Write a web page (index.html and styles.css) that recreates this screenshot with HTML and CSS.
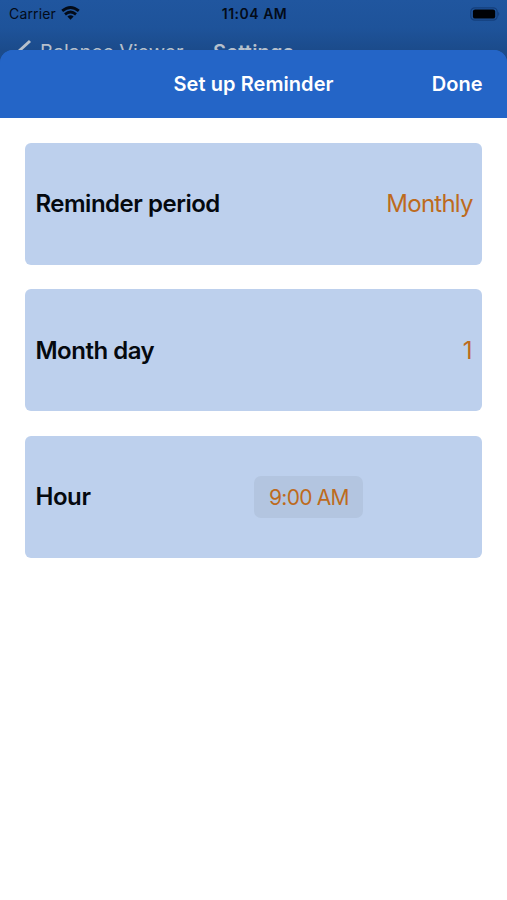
FILE: index.html
```html
<!DOCTYPE html>
<html lang="en">
<head>
<meta charset="utf-8">
<title>Set up Reminder</title>
<link rel="stylesheet" href="styles.css">
</head>
<body>
<div class="screen">
  <div class="status">
    <div class="carrier"><span>Carrier</span>
      <svg class="wifi" width="19" height="14" viewBox="0 0 19 14"><g fill="none" stroke="#030b18" stroke-width="2.8"><path d="M1.2 4.9Q9.5-2 17.8 4.9"/><path d="M4 8.3Q9.5 3.8 15 8.3"/></g><path d="M6.4 10.6Q9.5 8 12.6 10.6L9.5 13.8Z" fill="#030b18"/></svg>
    </div>
    <span class="time">11:04 AM</span>
    <svg class="battery" width="30" height="14" viewBox="0 0 30 14"><rect x=".8" y=".8" width="26.4" height="12.4" rx="4" fill="none" stroke="#143f7c" stroke-width="1.2"/><rect x="2.9" y="2.4" width="22.3" height="9.2" rx="2.2" fill="#000205"/><path d="M28.2 4.8Q30.4 7 28.2 9.2Z" fill="#143f7c"/></svg>
  </div>
  <div class="under">
    <svg class="back" width="14" height="24" viewBox="0 0 14 24"><path d="M12 2L1 12L12 22" fill="none" stroke="#b6c0cc" stroke-width="3"/></svg>
    <span class="parent">Balance Viewer</span><span class="current">Settings</span>
  </div>
  <main class="sheet">
    <header class="bar"><h1 class="title">Set up Reminder</h1><span class="done">Done</span></header>
    <div class="list">
      <section class="card"><span class="label period">Reminder period</span><span class="value monthly">Monthly</span></section>
      <section class="card"><span class="label day">Month day</span><span class="value">1</span></section>
      <section class="card"><span class="label hour">Hour</span><span class="picker">9:00 AM</span></section>
    </div>
  </main>
</div>
</body>
</html>
```
FILE: styles.css
```css
* { box-sizing: border-box; }
body { margin: 0; font-family: Inter, "Liberation Sans", sans-serif; }
.screen { width: 507px; height: 900px; overflow: hidden; background: linear-gradient(#20569f 0, #1e539a 28px, #1b4b8b 50px, #1b4b8b 100%); display: flex; flex-direction: column; }
.status { height: 27px; flex: none; display: grid; grid-template-columns: 1fr auto 1fr; align-items: center; padding: 0 7px 0 9px; color: #030b18; font-size: 14px; }
.carrier { display: flex; align-items: center; gap: 5px; letter-spacing: .15px; }
.wifi { position: relative; top: -.5px; }
.time { font-weight: 600; letter-spacing: .5px; }
.battery { justify-self: end; }
.under { height: 23px; flex: none; display: flex; align-items: flex-start; padding: 12px 0 0 18px; color: #b6c0cc; font-size: 20px; line-height: 26px; }
.parent { margin-left: 8px; width: 173px; letter-spacing: -.2px; }
.current { font-weight: 600; letter-spacing: .2px; }
.sheet { flex: 1; background: linear-gradient(#2465c7 60px, #fff 60px); border-radius: 13px 13px 0 0; }
.bar { height: 68.4px; background: #2465c7; border-radius: 13px 13px 0 0; color: #fff; display: grid; grid-template-columns: 1fr auto 1fr; align-items: center; padding: 0 24.5px; }
.title { grid-column: 2; margin: 0; font-size: 20px; line-height: 24px; font-weight: 600; letter-spacing: .07px; }
.done { justify-self: end; font-size: 20px; line-height: 24px; font-weight: 600; }
.list { padding: 24.2px 24.6px 24px 25.4px; display: flex; flex-direction: column; gap: 24.6px; }
.card { height: 122px; background: #bdd0ed; border-radius: 6px; display: flex; align-items: center; justify-content: space-between; padding: 1px 10px 0; }
.label { font-size: 24px; line-height: 30px; font-weight: 600; color: #05090f; letter-spacing: -.48px; }
.hour { letter-spacing: -.4px; }
.value { font-size: 24px; line-height: 30px; color: #bd6b1d; }
.monthly { letter-spacing: -.75px; margin-right: -.4px; }
.picker { width: 109px; height: 42px; margin-right: 109px; border-radius: 7px; background: #b3c5e0; color: #bd6b1d; font-size: 21px; letter-spacing: -.75px; display: flex; align-items: center; justify-content: center; }
```
